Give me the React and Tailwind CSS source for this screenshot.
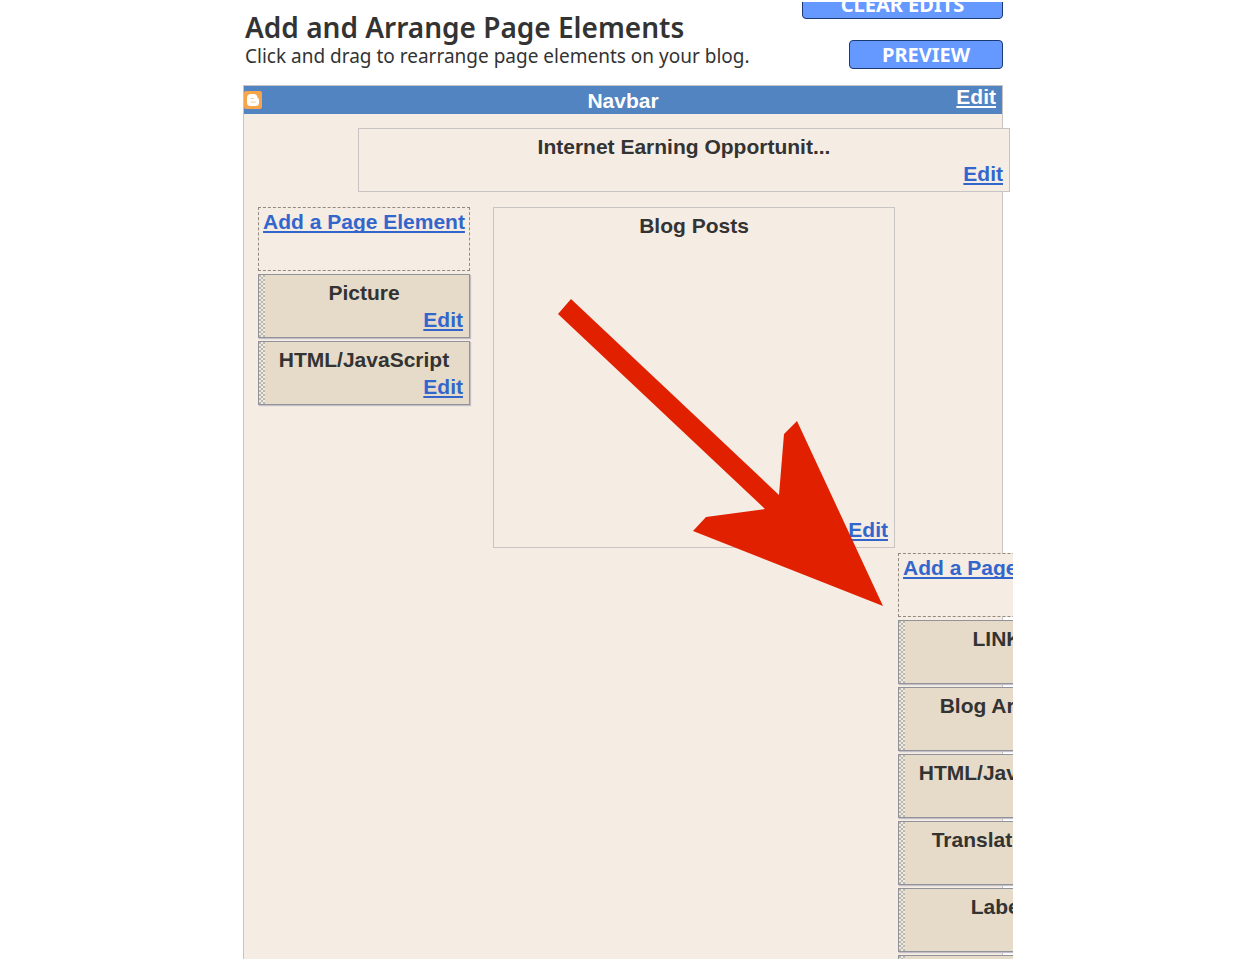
function Logo() {
  return (
    <svg viewBox="0 0 18 18" className="h-[18px] w-[18px]" aria-hidden="true">
      <rect width="18" height="18" rx="2" fill="#f6a54b" />
      <path
        d="M7 3h2.500a4 4 0 0 1 4 3.500c.1.800.400.900 1 1 .5.100.500.500.500 1V11.500a3.500 3.500 0 0 1-3.500 3.500H6.500A3.500 3.500 0 0 1 3 11.500V7a4 4 0 0 1 4-4Z"
        fill="#fff"
      />
      <path d="M7 7.500h2.500M7 11h4.500" stroke="#f8c892" strokeLinecap="round" />
    </svg>
  );
}

function EditLink() {
  return (
    <a
      href="#edit"
      className="text-[#3366cc] underline decoration-2 underline-offset-2 [text-decoration-skip-ink:none]"
    >
      Edit
    </a>
  );
}

function Widget({ title }) {
  return (
    <div className="relative border border-[#92929a] bg-[#e6dbc8] px-1.5 py-1 shadow-[1px_1px_1px_#c4bfc6]">
      <span className="absolute inset-y-0 left-0 w-[6px] bg-[#efeae0] bg-[radial-gradient(circle_at_1px_1px,#bab6ae_1px,transparent_1px),radial-gradient(circle_at_1px_1px,#bab6ae_1px,transparent_1px)] bg-[size:4px_4px] bg-[position:0_0,2px_2px]" />
      <h3 className="text-center whitespace-nowrap">{title}</h3>
      <p className="text-right">
        <EditLink />
      </p>
    </div>
  );
}

function AddElement() {
  return (
    <div className="h-16 border border-dashed border-[#92897f] bg-[#f5ece3] text-center whitespace-nowrap">
      <a
        href="#add"
        className="text-[#3366cc] underline decoration-2 underline-offset-2 [text-decoration-skip-ink:none]"
      >
        Add a Page Element
      </a>
    </div>
  );
}

function Column({ widgets, className }) {
  return (
    <div className={`flex w-[212px] shrink-0 flex-col gap-[3px] ${className}`}>
      <AddElement />
      {widgets.map((title, i) => (
        <Widget key={i} title={title} />
      ))}
    </div>
  );
}

function Arrow() {
  return (
    <svg
      viewBox="558 299 325 308"
      className="pointer-events-none absolute top-[91px] left-[64px] h-[308px] w-[325px]"
      aria-hidden="true"
    >
      <path
        d="M571 299 779 495 784 434 797 421 883 606 693 531 706 517 765 509 558 314Z"
        fill="#e12000"
      />
    </svg>
  );
}

const left = ["Picture", "HTML/JavaScript"];
const right = [
  "LINKS",
  "Blog Archive",
  "HTML/JavaScript",
  "Translate Blog",
  "Labels",
  "HTML/JavaScript",
];

export default function App() {
  return (
    <div className="h-screen bg-white py-[2px] text-[#333]">
      <main className="mx-auto h-full max-w-[774px] overflow-hidden pr-[10px] pl-1">
        <header className="flex h-[83px] justify-between font-['Noto_Sans',sans-serif]">
          <div className="pt-2 pl-[2px]">
            <h1 className="text-[28px] leading-[34px] font-semibold whitespace-nowrap">
              Add and Arrange Page Elements
            </h1>
            <p className="text-[19px] leading-[24px] whitespace-nowrap">
              Click and drag to rearrange page elements on your blog.
            </p>
          </div>
          <div className="-mt-3 flex flex-col items-end gap-[21px] text-[20px] leading-[27px] font-bold text-white">
            <button className="w-[201px] rounded-[4px] border border-[#1c3a72] bg-[#6699ff]">
              CLEAR EDITS
            </button>
            <button className="w-[154px] rounded-[4px] border border-[#1c3a72] bg-[#6699ff]">
              PREVIEW
            </button>
          </div>
        </header>

        <section className="min-h-full border border-[#c8c4c4] bg-[#f5ece3] font-['Liberation_Sans',sans-serif] text-[21px] leading-[27px] font-bold">
          <div className="grid h-7 grid-cols-3 bg-[#5284c1] text-white">
            <div className="self-center">
              <Logo />
            </div>
            <h2 className="self-center text-center">Navbar</h2>
            <a
              href="#edit"
              className="mr-1.5 justify-self-end leading-[22px] underline decoration-2 underline-offset-2"
            >
              Edit
            </a>
          </div>

          <div className="mt-3.5 -mr-2 ml-[114px] border border-[#c8c4c4] bg-[#f5ece3] px-1.5 py-1">
            <h2 className="text-center">Internet Earning Opportunit...</h2>
            <p className="text-right">
              <EditLink />
            </p>
          </div>

          <div className="mt-[15px] ml-3.5 flex items-start">
            <Column widgets={left} className="mr-[23px]" />
            <div className="relative flex h-[341px] w-[402px] shrink-0 flex-col justify-between border border-[#c8c4c4] px-1.5 py-1">
              <h2 className="text-center">Blog Posts</h2>
              <p className="text-right">
                <EditLink />
              </p>
              <Arrow />
            </div>
            <Column widgets={right} className="mt-[346px] ml-[3px]" />
          </div>
        </section>
      </main>
    </div>
  );
}
